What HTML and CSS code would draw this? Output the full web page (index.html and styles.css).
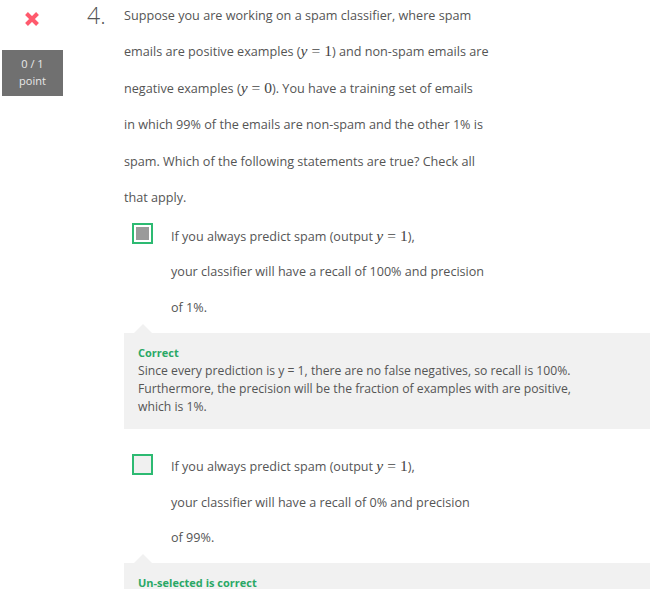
FILE: index.html
```html
<!DOCTYPE html>
<html>
<head>
<meta charset="utf-8">
<link rel="stylesheet" href="styles.css">
</head>
<body>
<div class="question">
  <div class="side">
    <svg class="xicon" width="16" height="16" viewBox="0 0 16 16"><path d="M2.5 2.5 L13.5 13.5 M13.5 2.5 L2.5 13.5" stroke="#ff5a6d" stroke-width="4" stroke-linecap="butt" fill="none"/></svg>
    <div class="score">0 / 1<br>point</div>
  </div>
  <div class="num">4.</div>
  <div class="content">
    <div class="prompt">Suppose you are working on a spam classifier, where spam<br>emails are positive examples (<span class="m"><i>y</i><span class="eq">=</span>1</span>) and non-spam emails are<br>negative examples (<span class="m"><i>y</i><span class="eq">=</span>0</span>). You have a training set of emails<br>in which 99% of the emails are non-spam and the other 1% is<br>spam. Which of the following statements are true? Check all<br>that apply.</div>

    <div class="option">
      <span class="check checked"><span class="fill"></span></span>
      <div class="opt-text">If you always predict spam (output <span class="m"><i>y</i><span class="eq">=</span>1</span>),<br>your classifier will have a recall of 100% and precision<br>of 1%.</div>
    </div>
    <div class="feedback">
      <div class="fb-title">Correct</div>
      <div class="fb-text">Since every prediction is y = 1, there are no false negatives, so recall is 100%.<br>Furthermore, the precision will be the fraction of examples with are positive,<br>which is 1%.</div>
    </div>

    <div class="option">
      <span class="check"></span>
      <div class="opt-text">If you always predict spam (output <span class="m"><i>y</i><span class="eq">=</span>1</span>),<br>your classifier will have a recall of 0% and precision<br>of 99%.</div>
    </div>
    <div class="feedback">
      <div class="fb-title">Un-selected is correct</div>
      <div class="fb-text">&nbsp;</div>
    </div>
  </div>
</div>
</body>
</html>
```
FILE: styles.css
```css
html, body {
  margin: 0;
  padding: 0;
  background: #fff;
}
body {
  font-family: "Open Sans", "Liberation Sans", sans-serif;
  color: #555;
}
.question {
  display: flex;
  align-items: flex-start;
}
.side {
  width: 61px;
  margin-left: 2px;
  display: flex;
  flex-direction: column;
  align-items: center;
}
.xicon {
  display: block;
  margin-top: 11px;
  margin-left: -2px;
}
.score {
  margin-top: 23px;
  width: 61px;
  height: 46px;
  box-sizing: border-box;
  padding-top: 5px;
  background: #707070;
  color: #e8e8e8;
  font-size: 11px;
  line-height: 17px;
  text-align: center;
}
.num {
  width: 61px;
  box-sizing: border-box;
  padding-left: 24px;
  font-size: 23px;
  font-weight: 300;
  line-height: 30px;
  color: #555;
}
.content {
  width: 526px;
}
.prompt {
  font-size: 12.65px;
  line-height: 36.4px;
  margin-top: -3px;
}
.m {
  font-family: "Liberation Serif", "DejaVu Serif", serif;
  font-size: 15.5px;
  line-height: 1;
  color: #444;
}
.m i {
  font-style: italic;
}
.eq {
  padding: 0 4px;
}
.option {
  display: flex;
  align-items: flex-start;
  padding-left: 8px;
  margin-top: 2px;
}
.check {
  width: 21px;
  height: 21px;
  box-sizing: border-box;
  border: 2px solid #2dba72;
  background: #f0f0f0;
  margin-top: 6px;
  flex: none;
  display: flex;
  align-items: center;
  justify-content: center;
}
.check.checked {
  background: #fff;
}
.check .fill {
  width: 13px;
  height: 13px;
  background: #9a9a9a;
}
.opt-text {
  margin-left: 18px;
  padding-top: 1.5px;
  font-size: 12.6px;
  line-height: 35.5px;
}
.feedback {
  position: relative;
  margin-top: 7.5px;
  margin-bottom: 19px;
  background: #f1f1f1;
  padding: 11px 14px 13px;
}
.feedback::before {
  content: "";
  position: absolute;
  left: 10px;
  top: -9px;
  border-left: 9px solid transparent;
  border-right: 9px solid transparent;
  border-bottom: 9px solid #f1f1f1;
}
.fb-title {
  font-size: 11px;
  font-weight: 700;
  line-height: 18px;
  color: #2aa866;
}
.fb-text {
  font-size: 12.2px;
  line-height: 18px;
  color: #555;
}
```
